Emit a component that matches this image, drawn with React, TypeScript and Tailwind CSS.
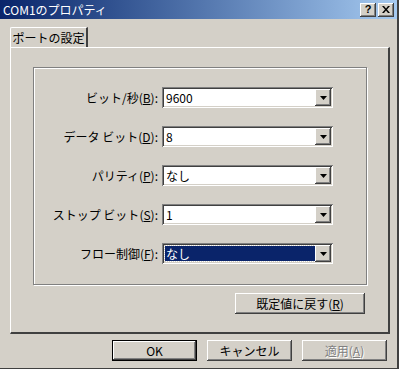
import React from "react";

const font = { fontFamily: '"Noto Sans CJK JP", "Liberation Sans", sans-serif' };

const raised =
  "shadow-[inset_-1px_-1px_#404040,inset_1px_1px_#ffffff,inset_-2px_-2px_#808080,inset_2px_2px_#d4d0c8]";
const sunken =
  "shadow-[inset_1px_1px_#808080,inset_-1px_-1px_#ffffff,inset_2px_2px_#404040,inset_-2px_-2px_#d4d0c8]";

function Arrow() {
  return (
    <div className={`w-[16px] h-[17px] bg-[#d4d0c8] flex items-center justify-center ${raised}`}>
      <svg width="7" height="4" viewBox="0 0 7 4">
        <path d="M0 0h7L3.5 4z" fill="#000" />
      </svg>
    </div>
  );
}

function Label({ text, key1 }: { text: string; key1: string }) {
  return (
    <div className="w-[128px] pr-[4px] text-right text-[12px] leading-none text-black whitespace-nowrap">
      {text}(<span className="underline">{key1}</span>):
    </div>
  );
}

function Combo({ value, selected }: { value: string; selected?: boolean }) {
  return (
    <div className={`w-[171px] h-[21px] bg-white flex items-center p-[2px] ${sunken}`}>
      <div className="flex-1 h-full pl-[1px] py-[1px]">
        {selected ? (
          <div className="h-full bg-[#0a246a] text-white text-[12px] leading-none flex items-center pl-[1px] outline-1 outline-dotted outline-[#d4d0c8]">
            {value}
          </div>
        ) : (
          <div className="h-full text-black text-[12px] leading-none flex items-center pl-[1px]">{value}</div>
        )}
      </div>
      <Arrow />
    </div>
  );
}

function Row({ label, k, value, selected }: { label: string; k: string; value: string; selected?: boolean }) {
  return (
    <div className="flex items-center h-[21px]">
      <Label text={label} key1={k} />
      <Combo value={value} selected={selected} />
    </div>
  );
}

function Button({ children, def, disabled, w }: { children: React.ReactNode; def?: boolean; disabled?: boolean; w: string }) {
  return (
    <div
      className={`${w} h-[21px] bg-[#d4d0c8] flex items-center justify-center text-[12px] leading-none ${
        def
          ? "shadow-[inset_0_0_0_1px_#000000,inset_-2px_-2px_#404040,inset_2px_2px_#ffffff,inset_-3px_-3px_#808080]"
          : raised
      } ${disabled ? "text-[#808080] [text-shadow:1px_1px_0_#ffffff]" : "text-black"}`}
    >
      {children}
    </div>
  );
}

export default function App() {
  return (
    <div style={font} className="w-[399px] h-[369px] bg-[#d4d0c8] flex flex-col border-r-[2px] border-r-[#404040] border-b border-b-[#404040] overflow-hidden">
      {/* Title bar */}
      <div className="h-[19px] flex items-center justify-between pl-[3px] pr-[3px] bg-gradient-to-r from-[#0a246a] to-[#a6caf0] shrink-0">
        <span className="text-white text-[12px] leading-none">COM1のプロパティ</span>
        <div className="flex gap-[2px]">
          <div className={`w-[16px] h-[14px] bg-[#d4d0c8] flex items-center justify-center ${raised}`}>
            <span className="text-[11px] font-bold leading-none text-black" style={{ fontFamily: '"Liberation Sans", sans-serif' }}>?</span>
          </div>
          <div className={`w-[16px] h-[14px] bg-[#d4d0c8] flex items-center justify-center ${raised}`}>
            <svg width="8" height="7" viewBox="0 0 8 7">
              <path d="M0 0h2l2 2.5L6 0h2L5 3.5 8 7H6L4 4.5 2 7H0l3-3.5z" fill="#000" />
            </svg>
          </div>
        </div>
      </div>

      {/* Tab header */}
      <div className="pl-[10px] mt-[8px] flex shrink-0">
        <div className="h-[20px] w-[78px] border-l border-t border-white border-r-2 border-r-[#404040] rounded-tl-[2px] flex items-center justify-center text-[12px] leading-none text-black">
          ポートの設定
        </div>
      </div>

      {/* Tab panel */}
      <div className="ml-[10px] w-[380px] h-[287px] border-l border-t border-white border-r-2 border-r-[#404040] border-b-2 border-b-[#404040] pt-[19px] pl-[22px] flex flex-col shrink-0">
        <div className="w-[334px] h-[218px] border border-[#808080] shadow-[inset_1px_1px_#ffffff,1px_1px_#ffffff] pt-[19px] flex flex-col gap-[18px]">
          <Row label="ビット/秒" k="B" value="9600" />
          <Row label="データ ビット" k="D" value="8" />
          <Row label="パリティ" k="P" value="なし" />
          <Row label="ストップ ビット" k="S" value="1" />
          <Row label="フロー制御" k="F" value="なし" selected />
        </div>
        <div className="w-[334px] flex justify-end mt-[8px] pr-[2px]">
          <Button w="w-[130px]">
            既定値に戻す(<span className="underline">R</span>)
          </Button>
        </div>
      </div>

      {/* Bottom buttons */}
      <div className="flex justify-end gap-[10px] mt-[6px] pr-[10px]">
        <Button w="w-[85px]" def>
          OK
        </Button>
        <Button w="w-[85px]">キャンセル</Button>
        <Button w="w-[85px]" disabled>
          適用(<span className="underline">A</span>)
        </Button>
      </div>
    </div>
  );
}
